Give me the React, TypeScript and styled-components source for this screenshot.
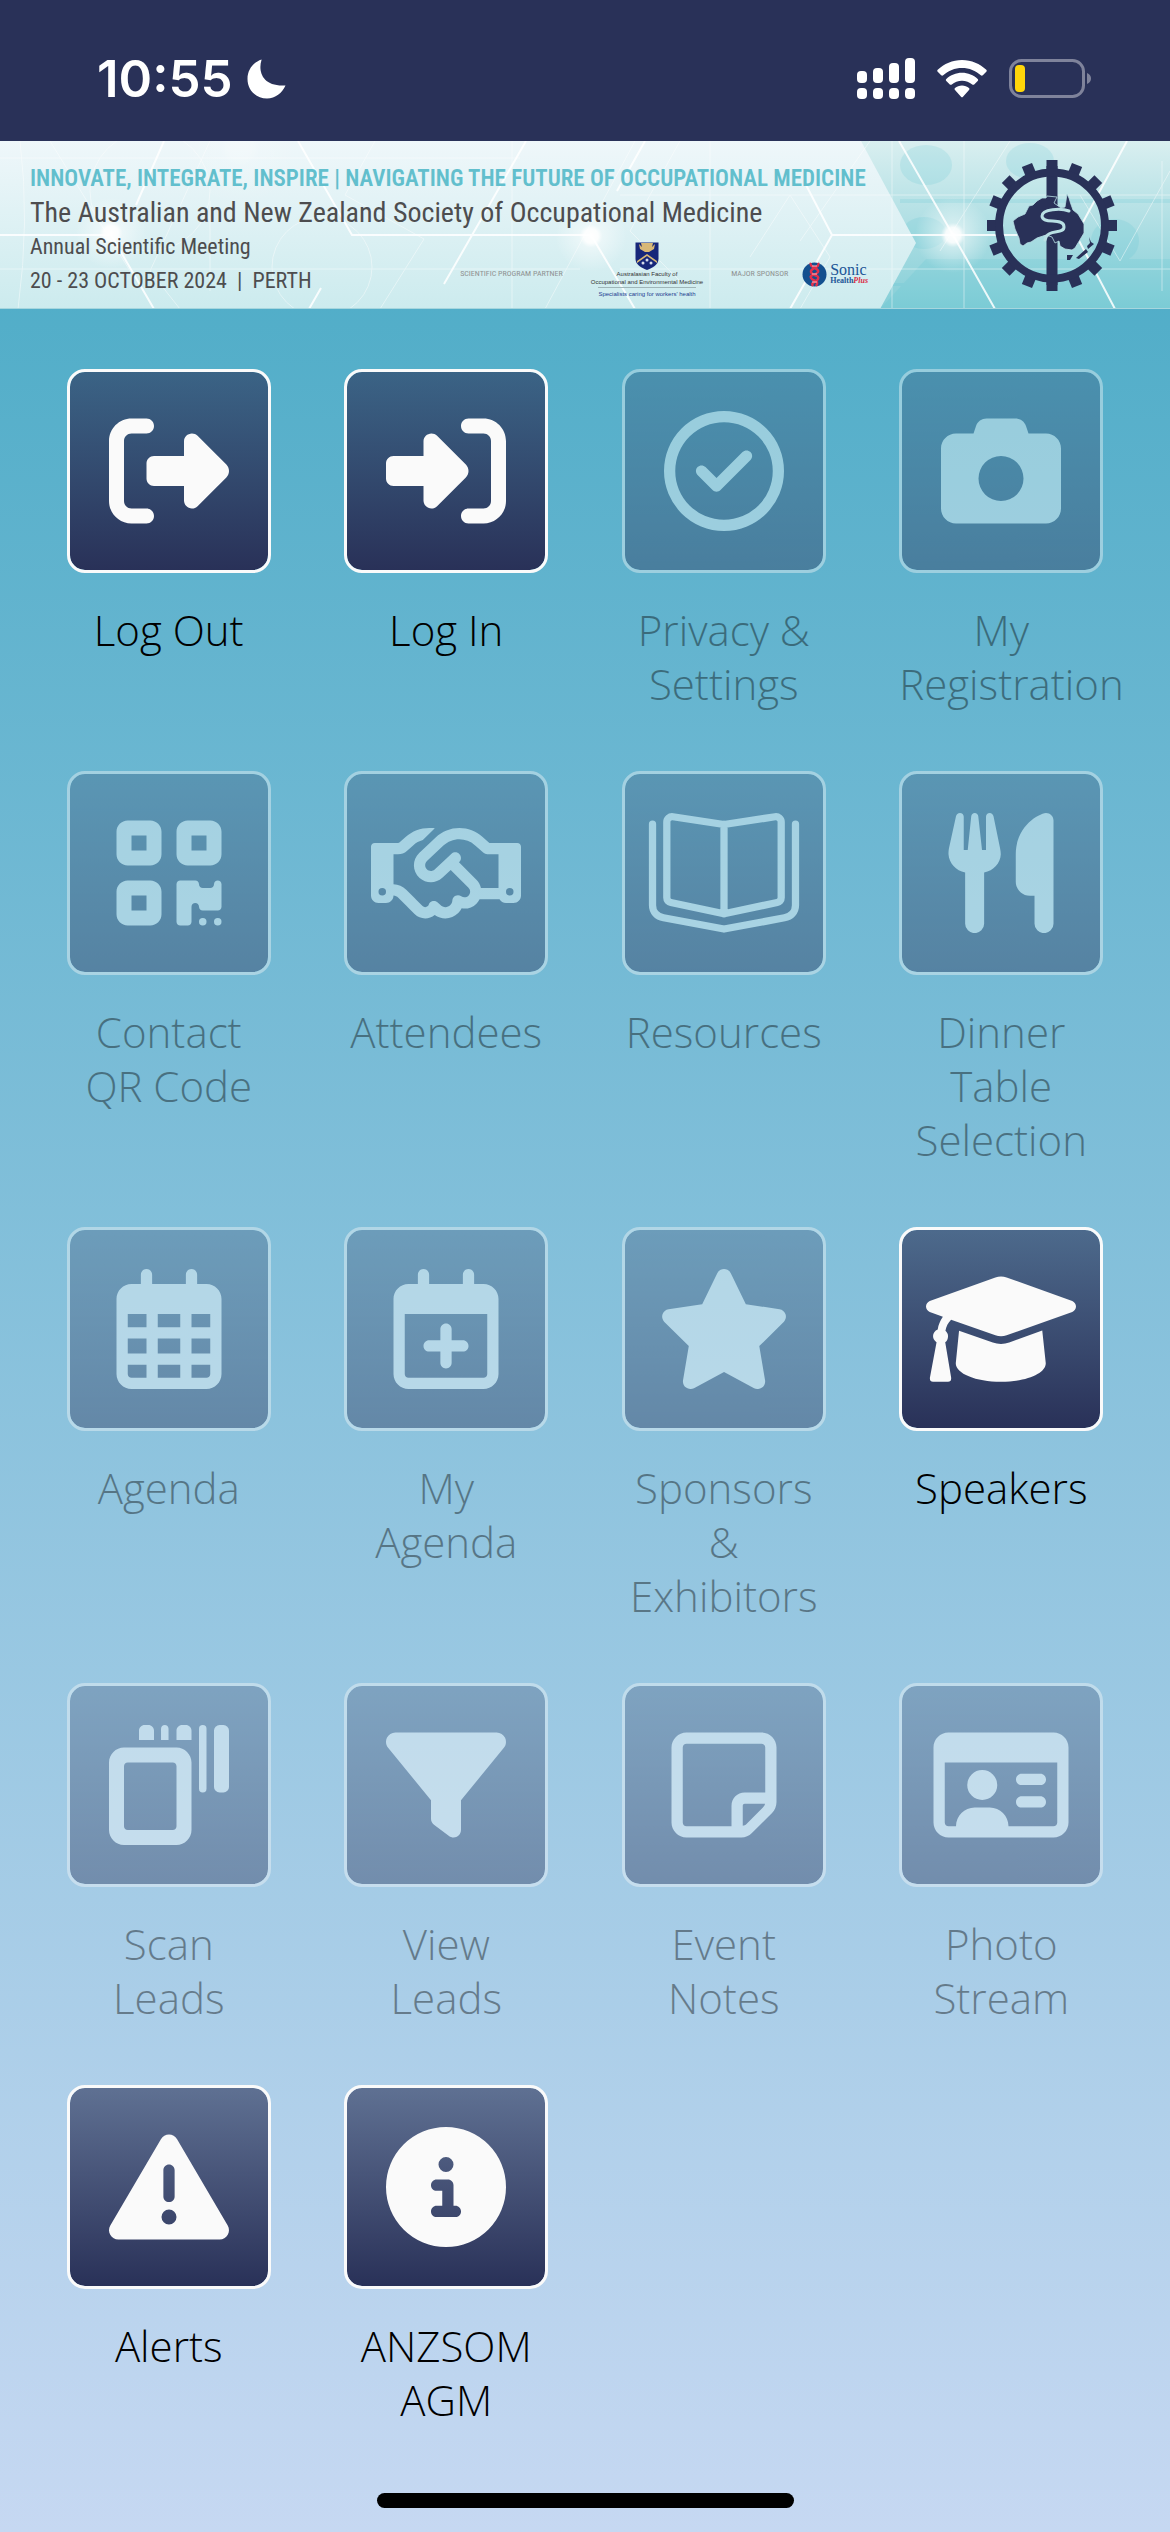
import React from 'react';
import styled, { createGlobalStyle } from 'styled-components';
import {
  FaCamera,
  FaCircleInfo,
  FaFilter,
  FaQrcode,
  FaRegCalendarDays,
  FaRegCalendarPlus,
  FaRegCircleCheck,
  FaRegHandshake,
  FaRegIdCard,
  FaRightFromBracket,
  FaRightToBracket,
  FaStar,
  FaTriangleExclamation,
} from 'react-icons/fa6';

const navy = '#293158';
const condensed = '"Liberation Sans Narrow", "Roboto Condensed", "Liberation Sans", sans-serif';

const GlobalStyle = createGlobalStyle`
  body { margin: 0; }
  * { box-sizing: border-box; }
`;

const Page = styled.div`
  min-height: 100vh;
  display: flex;
  flex-direction: column;
  background: linear-gradient(#42a8c3, #c6d8f2);
  font-family: 'Open Sans', 'Noto Sans', sans-serif;
`;

/* ---------- status bar ---------- */

const StatusBar = styled.header`
  display: flex;
  align-items: center;
  justify-content: space-between;
  padding: 48px 78px 32px 97px;
  background: ${navy};
  color: #fff;
`;

const StatusGroup = styled.div<{ $gap: number }>`
  display: flex;
  align-items: center;
  gap: ${(p) => p.$gap}px;
`;

const Clock = styled.time`
  font: 600 51px/61px Inter, Roboto, sans-serif;
`;

const Moon = () => (
  <svg width="40" height="40" viewBox="0 0 40 40" fill="#fff" aria-hidden="true">
    <path d="M14.5 1C11 12 15 28 38.500 26.500C35 34 28.500 39.500 20 39.500C9 39.500 0.500 31 0.500 20C0.500 11 6 3.500 14.500 0.500Z" />
  </svg>
);

const bars = [13, 10, 5, 0];
const Signal = () => (
  <svg width="58" height="42" viewBox="0 0 58 42" fill="#fff" aria-hidden="true">
    {bars.map((top, i) => (
      <g key={top}>
        <rect x={i * 16} y={top} width="10" height={25 - top} rx="4" />
        <rect x={i * 16} y="30" width="10" height="11" rx="4" />
      </g>
    ))}
  </svg>
);

const Wifi = () => (
  <svg width="50" height="38" viewBox="0 0 50 38" fill="#fff" aria-hidden="true">
    <path d="M25 0C34.500 0 43 3.800 49.300 9.800C49.900 10.300 49.900 11.200 49.300 11.800L45.800 15.300C45.200 15.900 44.400 15.900 43.800 15.300C38.800 10.700 32.200 8 25 8C17.800 8 11.200 10.700 6.200 15.300C5.600 15.900 4.800 15.900 4.200 15.300L0.700 11.800C0.100 11.200 0.100 10.300 0.700 9.800C7 3.800 15.500 0 25 0Z" />
    <path d="M25 12.800C31 12.800 36.500 15.100 40.700 18.900C41.300 19.400 41.300 20.300 40.700 20.900L37.200 24.400C36.600 25 35.800 25 35.200 24.500C32.500 22.100 28.900 20.700 25 20.700C21.100 20.700 17.500 22.100 14.800 24.500C14.200 25 13.400 25 12.800 24.400L9.300 20.900C8.700 20.300 8.700 19.400 9.300 18.900C13.500 15.100 19 12.800 25 12.800Z" />
    <path d="M25 25.600C27.700 25.600 30.100 26.500 32 28.100C32.600 28.600 32.600 29.400 32 30L26 36.800C25.400 37.500 24.600 37.500 24 36.800L18 30C17.400 29.400 17.400 28.600 18 28.100C19.900 26.500 22.300 25.600 25 25.600Z" />
  </svg>
);

const Battery = () => (
  <svg width="83" height="40" viewBox="0 0 83 40" aria-hidden="true">
    <rect x="1.500" y="1.500" width="73" height="36" rx="11" fill="none" stroke="#7f839b" strokeWidth="3" />
    <path d="M78 14C80.700 15.200 82 17 82 19.500S80.700 23.800 78 25Z" fill="#7f839b" />
    <rect x="6" y="6" width="10" height="27" rx="4" fill="#ffd60a" />
  </svg>
);

/* ---------- event banner ---------- */

const Banner = styled.section`
  position: relative;
  display: flex;
  align-items: center;
  justify-content: space-between;
  padding: 0 53px 0 30px;
  overflow: hidden;
  background: #cfe9ec;
`;

const BannerArt = styled.svg`
  position: absolute;
  inset: 0;
  width: 100%;
  height: 100%;
`;

const BannerText = styled.div`
  position: relative;
  flex: 0 1 838px;
  padding: 21px 0 11px;
`;

const Theme = styled.p`
  margin: 0;
  font: 600 23px/34px ${condensed};
  color: #62bfcd;
  white-space: nowrap;
`;

const Society = styled.h1`
  margin: 0;
  font: 400 28px/34px ${condensed};
  color: #4d4d4f;
  white-space: nowrap;
`;

const BannerFoot = styled.div`
  display: flex;
  justify-content: space-between;
  align-items: flex-end;
`;

const Detail = styled.p`
  margin: 0;
  font: 400 22px/34px ${condensed};
  color: #4d4d4f;
  white-space: pre;
`;

const Partners = styled.div`
  display: flex;
  align-items: flex-end;
  gap: 28px;
`;

const PartnerGroup = styled.div`
  display: flex;
  align-items: center;
  gap: 14px;
  height: 48px;
`;

const PartnerLabel = styled.span`
  font: 400 8px/12px ${condensed};
  color: #8f9292;
  white-space: nowrap;
`;

const Faculty = styled.div`
  display: flex;
  flex-direction: column;
  align-items: center;
`;

const FacultyText = styled.span<{ $accent?: boolean }>`
  font: 400 6px/8px 'Liberation Sans', sans-serif;
  color: ${(p) => (p.$accent ? '#23408f' : '#333')};
  white-space: nowrap;
  ${(p) => p.$accent && 'margin-top: 1px; padding-top: 2px; border-top: 1px solid #9fb5b8;'}
`;

const Sonic = styled.div`
  display: flex;
  align-items: center;
  gap: 3px;
`;

const SonicName = styled.div`
  display: flex;
  flex-direction: column;
  font-family: 'Liberation Serif', serif;
  color: #1c5596;
`;

const SonicTop = styled.span`
  font-size: 16px;
  line-height: 14px;
`;

const SonicSub = styled.span`
  font-size: 8px;
  line-height: 8px;
  font-weight: 700;
  em { color: #dc2b45; }
`;

const BannerBackground = () => (
  <BannerArt viewBox="0 0 1170 168" preserveAspectRatio="xMidYMid slice" aria-hidden="true">
    <defs>
      <linearGradient id="right" x1="0" y1="0" x2="0" y2="1">
        <stop offset="0" stopColor="#d9eff0" />
        <stop offset="1" stopColor="#84ced7" />
      </linearGradient>
      <linearGradient id="left" x1="0" y1="0" x2="0" y2="1">
        <stop offset="0" stopColor="#eff7fa" />
        <stop offset="1" stopColor="#ccebee" />
      </linearGradient>
      <radialGradient id="glow">
        <stop offset="0" stopColor="#fff" />
        <stop offset="0.200" stopColor="#fff" stopOpacity="0.900" />
        <stop offset="0.320" stopColor="#fff" stopOpacity="0.450" />
        <stop offset="1" stopColor="#fff" stopOpacity="0" />
      </radialGradient>
    </defs>
    <rect width="1170" height="168" fill="url(#right)" />
    <g fill="#4fc0cf" opacity="0.160">
      <ellipse cx="926" cy="24" rx="26" ry="20" />
      <ellipse cx="924" cy="92" rx="22" ry="16" />
      <ellipse cx="920" cy="153" rx="22" ry="15" />
      <ellipse cx="1030" cy="20" rx="24" ry="18" />
      <ellipse cx="1115" cy="100" rx="24" ry="22" />
      <ellipse cx="1094" cy="155" rx="20" ry="14" />
      <path d="M926 118H1170V124H926ZM880 142H1170V145H880ZM900 58H1170V62H900Z" />
      <path d="M926 118L880 168H1170V118Z" />
    </g>
    <path d="M0 0H861L916 102L880 168H0Z" fill="url(#left)" />
    <g fill="none" stroke="#fff" strokeWidth="1" opacity="0.450">
      <path d="M0 17H520M0 128H580M20 0Q30 80 18 168M210 60V150M512 0V168M620 54H1170M620 128H1170M710 0V168M892 0V168M964 0V168M1162 20V150" />
      <path d="M50 0L130 130M210 0L150 130L180 168M345 54L424 98L380 168M345 54L375 0M545 168L635 0M680 0L630 90L680 140M750 116L790 54L830 116L800 168M870 0L800 100M1010 0L940 110M1080 54L1120 120L1170 30" />
      <circle cx="322" cy="126" r="50" />
      <circle cx="150" cy="50" r="60" />
    </g>
    <g fill="none" stroke="#fff" strokeWidth="2" opacity="0.850">
      <path d="M0 94H111L154 168M164 0L136 64M298 0L352 94H591L635 168M526 0L444 143M321 147L309 168M645 0L617 50M790 168L832 94L806 44M832 94H1060M899 0L953 94L995 168M1127 0L1076 94L1115 168" />
    </g>
    <circle cx="111" cy="92" r="36" fill="url(#glow)" />
    <circle cx="591" cy="95" r="36" fill="url(#glow)" />
    <circle cx="953" cy="94" r="38" fill="url(#glow)" />
    <circle cx="240" cy="6" r="60" fill="url(#glow)" opacity="0.300" />
    <rect y="167" width="1170" height="1" fill="#a6d6de" />
  </BannerArt>
);

const Crest = () => (
  <svg width="24" height="28" viewBox="0 0 24 28" aria-hidden="true">
    <path d="M0.500 0.500H23.500V17C23.500 23 17 26 12 28C7 26 0.500 23 0.500 17Z" fill="#17277a" />
    <path d="M4 2L7 5L6 1H18L17 5L20 2L19 7L14 10H10L5 7Z" fill="#d8b877" />
    <path d="M2 19L12 12L22 19V21L12 14L2 21Z" fill="#d8b877" />
    <g fill="#d6dbea">
      <circle cx="12" cy="18" r="1.500" />
      <circle cx="8" cy="21" r="1.500" />
      <circle cx="16" cy="21" r="1.500" />
    </g>
  </svg>
);

const SonicMark = () => (
  <svg width="25" height="25" viewBox="0 0 25 25" aria-hidden="true">
    <circle cx="12.500" cy="12.500" r="12" fill="#14508f" />
    <path d="M9 1C6 5 18 6 16 10S7 12 9 16S18 18 14 24M16 1C19 5 8 6 9 10S18 13 16 17S8 20 11 24" fill="none" stroke="#e2304c" strokeWidth="2.500" />
    <path d="M10 4H15M10 12H15M10 20H15" stroke="#f6b8c2" strokeWidth="1" />
  </svg>
);

const teeth = Array.from({ length: 16 }, (_, i) => i * 22.5);
const GearLogo = styled(({ className }: { className?: string }) => (
  <svg className={className} width="130" height="131" viewBox="0 0 130 131" role="img" aria-label="ANZSOM">
    <g fill={navy}>
      {teeth.map((angle) => (
        <rect key={angle} x="59.500" y="0" width="11" height="12" transform={`rotate(${angle} 65 65.500)`} />
      ))}
      <rect x="59.500" y="6" width="11" height="119" />
    </g>
    <circle cx="65" cy="65.500" r="53" fill="none" stroke={navy} strokeWidth="8" />
    <path
      d="M26 61L31 57L38 54L42 46L46 45L50 41L55 38L59 38L60 36L70 37L67 43L74 48L78 47L80 34L82 38L83.500 43L86 50L91 54L94 59L97 64L97 73L91 83L88 88L85 90L78 89L73 86L72 81L68 83L65 77L59 75L50 78L44 82L40 83L36 86L33 84L32 78L28 69Z"
      fill={navy}
      stroke="#b9e0e4"
      strokeWidth="0.800"
    />
    <path d="M82 51C74 48 55 49 55 56C55 65 77 57 77 67C77 75 60 68 58 80" fill="none" stroke="#b9e0e4" strokeWidth="3" strokeLinecap="round" />
    <path d="M80 95H86L83 100H80ZM102 77L104 82L107 84L101 89L100 86L103 83ZM99 89L101 92L92 99L89 98Z" fill={navy} />
  </svg>
))`
  position: relative;
  flex: none;
`;

/* ---------- menu icons ---------- */

const Book = () => (
  <svg viewBox="0 0 640 512" fill="none" stroke="currentColor" strokeWidth="31" strokeLinecap="round" strokeLinejoin="round">
    <path d="M15 47V394C15 422 34 442 62 447L320 495L578 447C606 442 625 422 625 394V47" />
    <path d="M320 49L102 16C88 14 76 24 76 38V362C76 372 83 380 93 382L320 430L547 382C557 380 564 372 564 362V38C564 24 552 14 538 16ZM320 49V430" />
  </svg>
);

const ForkKnife = () => (
  <svg viewBox="0 0 448 512" fill="currentColor">
    <path d="M49 0C40 0 34 6 32 14L2 150C0 160 0 168 0 176C2 214 32 246 71 254V472A40.500 40.500 0 0 0 152 472V254C192 246 222 214 223 176C223 168 222 160 220 150L192 14C190 6 184 0 176 0C167 0 160 7 160 16V158H143L127 14C126 6 120 0 112 0C104 0 98 6 97 14L82 158H65V16C65 7 58 0 49 0Z" />
    <path d="M416 0C380 4 287 60 287 176V293C287 326 314 353 347 353H367V472A40.500 40.500 0 0 0 448 472V32C448 14 434 0 416 0Z" />
  </svg>
);

const GraduationCap = () => (
  <svg viewBox="0 0 640 512" fill="currentColor">
    <path d="M296 36C311 31 329 31 344 36L624 137C633 141 640 150 640 160C640 170 633 179 624 183L344 283C329 288 311 288 296 283L107 216C94 229 86 245 83 263C90 269 94 277 94 286C94 298 90 307 82 313L107 462C109 474 104 481 94 481H30C20 481 15 474 17 462L45 313C36 307 30 297 30 286C30 274 38 263 50 258C53 239 60 221 72 204L16 183C7 179 0 170 0 160C0 150 7 141 16 137Z" />
    <path d="M141 263L285 314C307 322 333 322 355 314L496 262L511 402C511 446 428 481 320 481C212 481 127 446 127 402Z" />
  </svg>
);

const ScanCards = () => (
  <svg viewBox="0 0 512 512" fill="currentColor">
    <path fillRule="evenodd" d="M64 96H288C323 96 352 125 352 160V448C352 483 323 512 288 512H64C29 512 0 483 0 448V160C0 125 29 96 64 96ZM80 160C71 160 64 167 64 176V432C64 441 71 448 80 448H272C281 448 288 441 288 432V176C288 167 281 160 272 160Z" />
    <path d="M128 64V24C128 11 139 0 152 0H168C181 0 192 11 192 24V64ZM222 64V16C222 7 229 0 238 0S254 7 254 16V64ZM288 64V24C288 11 299 0 312 0H328C341 0 352 11 352 24V64Z" />
    <rect x="384" width="32" height="288" rx="16" />
    <rect x="448" width="64" height="288" rx="24" />
  </svg>
);

const Note = () => (
  <svg viewBox="0 0 448 512" fill="currentColor">
    <path
      fillRule="evenodd"
      d="M64 32H384C419 32 448 61 448 96V328C448 346 441 363 429 375L343 461C331 473 315 480 298 480H64C29 480 0 451 0 416V96C0 61 29 32 64 32ZM64 80C55 80 48 87 48 96V416C48 425 55 432 64 432H256V344C256 313 281 288 312 288H400V96C400 87 393 80 384 80ZM304 430C310 429 316 426 320 422L390 352C395 347 398 342 399 336H312C308 336 304 340 304 344Z"
    />
  </svg>
);

/* ---------- menu ---------- */

const Menu = styled.main`
  display: grid;
  grid-template-columns: repeat(4, 1fr);
  justify-items: center;
  row-gap: 60px;
  padding: 60px 30px;
`;

const MenuItem = styled.button`
  display: flex;
  flex-direction: column;
  justify-content: flex-start;
  gap: 30px;
  width: 204px;
  padding: 0;
  border: 0;
  background: none;
  color: #000;
  font: 350 42px/54px 'Open Sans', 'Noto Sans', sans-serif;
  cursor: pointer;

  &:disabled {
    opacity: 0.4;
    cursor: default;
  }
`;

const Tile = styled.span`
  display: flex;
  align-items: center;
  justify-content: center;
  height: 204px;
  border: 3px solid #fafafa;
  border-radius: 18px;
  background: linear-gradient(rgba(41, 49, 88, 0.6), ${navy}) padding-box;
  color: #fafafa;

  svg {
    width: 100%;
    height: 120px;
  }
`;

const Label = styled.span`
  display: block;
  text-align: center;
  white-space: pre-line;
`;

const items: { label: string; icon: React.ReactNode; enabled?: boolean }[] = [
  { label: 'Log Out', icon: <FaRightFromBracket />, enabled: true },
  { label: 'Log In', icon: <FaRightToBracket />, enabled: true },
  { label: 'Privacy &\nSettings', icon: <FaRegCircleCheck /> },
  { label: 'My\nRegistration', icon: <FaCamera /> },
  { label: 'Contact\nQR Code', icon: <FaQrcode /> },
  { label: 'Attendees', icon: <FaRegHandshake /> },
  { label: 'Resources', icon: <Book /> },
  { label: 'Dinner\nTable\nSelection', icon: <ForkKnife /> },
  { label: 'Agenda', icon: <FaRegCalendarDays /> },
  { label: 'My\nAgenda', icon: <FaRegCalendarPlus /> },
  { label: 'Sponsors\n&\nExhibitors', icon: <FaStar /> },
  { label: 'Speakers', icon: <GraduationCap />, enabled: true },
  { label: 'Scan\nLeads', icon: <ScanCards /> },
  { label: 'View\nLeads', icon: <FaFilter /> },
  { label: 'Event\nNotes', icon: <Note /> },
  { label: 'Photo\nStream', icon: <FaRegIdCard /> },
  { label: 'Alerts', icon: <FaTriangleExclamation />, enabled: true },
  { label: 'ANZSOM\nAGM', icon: <FaCircleInfo />, enabled: true },
];

const HomeBar = styled.footer`
  display: flex;
  justify-content: center;
  margin-top: auto;
  padding: 6px 0 24px;

  &::before {
    content: '';
    width: 417px;
    height: 15px;
    border-radius: 8px;
    background: #000;
  }
`;

export default function App() {
  return (
    <Page>
      <GlobalStyle />
      <StatusBar>
        <StatusGroup $gap={14}>
          <Clock>10:55</Clock>
          <Moon />
        </StatusGroup>
        <StatusGroup $gap={22}>
          <Signal />
          <Wifi />
          <Battery />
        </StatusGroup>
      </StatusBar>

      <Banner>
        <BannerBackground />
        <BannerText>
          <Theme>INNOVATE, INTEGRATE, INSPIRE | NAVIGATING THE FUTURE OF OCCUPATIONAL MEDICINE</Theme>
          <Society>The Australian and New Zealand Society of Occupational Medicine</Society>
          <BannerFoot>
            <div>
              <Detail>Annual Scientific Meeting</Detail>
              <Detail>20 - 23 OCTOBER 2024  |  PERTH</Detail>
            </div>
            <Partners>
              <PartnerGroup>
                <PartnerLabel>SCIENTIFIC PROGRAM PARTNER</PartnerLabel>
              </PartnerGroup>
              <Faculty>
                <Crest />
                <FacultyText>Australasian Faculty of</FacultyText>
                <FacultyText>Occupational and Environmental Medicine</FacultyText>
                <FacultyText $accent>Specialists caring for workers' health</FacultyText>
              </Faculty>
              <PartnerGroup>
                <PartnerLabel>MAJOR SPONSOR</PartnerLabel>
                <Sonic>
                  <SonicMark />
                  <SonicName>
                    <SonicTop>Sonic</SonicTop>
                    <SonicSub>
                      Health<em>Plus</em>
                    </SonicSub>
                  </SonicName>
                </Sonic>
              </PartnerGroup>
            </Partners>
          </BannerFoot>
        </BannerText>
        <GearLogo />
      </Banner>

      <Menu>
        {items.map(({ label, icon, enabled }) => (
          <MenuItem key={label} type="button" disabled={!enabled}>
            <Tile aria-hidden="true">{icon}</Tile>
            <Label>{label}</Label>
          </MenuItem>
        ))}
      </Menu>
      <HomeBar />
    </Page>
  );
}
